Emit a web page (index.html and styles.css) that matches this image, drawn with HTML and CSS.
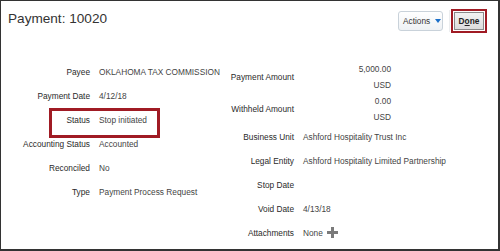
FILE: index.html
```html
<!DOCTYPE html>
<html lang="en">
<head>
<meta charset="utf-8">
<title>Payment: 10020</title>
<link rel="stylesheet" href="styles.css">
</head>
<body>
<section class="frame">

   <header class="page-head">
      <h1>Payment: 10020</h1>
      <div class="toolbar">
         <button class="btn-menu">Actions <span class="caret"></span></button>
         <span class="sep"></span>
         <span class="callout-btn"><button class="btn-done">D<u>o</u>ne</button></span>
      </div>
   </header>

   <div class="panels">

      <div class="form form-left">
         <div class="row"><span class="label">Payee</span><span class="value">OKLAHOMA TAX COMMISSION</span></div>
         <div class="row"><span class="label">Payment Date</span><span class="value">4/12/18</span></div>
         <div class="row callout"><span class="label">Status</span><span class="value">Stop initiated</span></div>
         <div class="row"><span class="label">Accounting Status</span><span class="value">Accounted</span></div>
         <div class="row"><span class="label">Reconciled</span><span class="value">No</span></div>
         <div class="row"><span class="label">Type</span><span class="value">Payment Process Request</span></div>
      </div>

      <div class="form form-right">
         <div class="row amount"><span class="label">Payment Amount</span><span class="value money">5,000.00<br>USD</span></div>
         <div class="row amount"><span class="label">Withheld Amount</span><span class="value money">0.00<br>USD</span></div>
         <div class="row"><span class="label">Business Unit</span><span class="value">Ashford Hospitality Trust Inc</span></div>
         <div class="row"><span class="label">Legal Entity</span><span class="value">Ashford Hospitality Limited Partnership</span></div>
         <div class="row"><span class="label">Stop Date</span><span class="value"></span></div>
         <div class="row"><span class="label">Void Date</span><span class="value">4/13/18</span></div>
         <div class="row"><span class="label">Attachments</span><span class="value">None
            <svg class="add" width="11" height="11" viewBox="0 0 11 11"><path d="M4 0h3v4h4v3H7v4H4V7H0V4h4z" fill="#7a7a7a"/></svg></span></div>
      </div>

   </div>

</section>
</body>
</html>
```

FILE: styles.css
```css
body {
   margin: 0;
   font-family: "Liberation Sans", Arial, sans-serif;
   color: #333;
}

.frame {
   width: 500px;
   height: 251px;
   box-sizing: border-box;
   border: 1px solid #333;
   border-right-width: 2px;
   border-bottom-width: 2px;
   background: #fff;
   overflow: hidden;
}

.page-head {
   display: flex;
   justify-content: space-between;
   align-items: flex-start;
   height: 51px;
   padding: 0 11px 0 7px;
}

h1 {
   margin: 10px 0 0;
   font-size: 13.6px;
   line-height: 16px;
   font-weight: normal;
   color: #333;
}

.toolbar {
   display: flex;
   align-items: center;
   margin-top: 8px;
}

.btn-menu {
   display: flex;
   align-items: center;
   gap: 5px;
   height: 20px;
   width: 45px;
   padding: 0 0 0 4px;
   border: 1px solid #c9d2da;
   border-radius: 3px;
   background: linear-gradient(#fff, #eef1f4);
   font: 8.3px "Liberation Sans", Arial, sans-serif;
   color: #333;
}

.caret {
   width: 0;
   height: 0;
   border-left: 3.5px solid transparent;
   border-right: 3.5px solid transparent;
   border-top: 4px solid #1a6fc9;
}

.sep {
   width: 1px;
   height: 22px;
   margin: 0 1px 0 6px;
   background: #eceef0;
}

.callout-btn {
   display: block;
   border: 2.5px solid #a01b24;
   padding: 1px;
}

.btn-done {
   display: block;
   width: 30px;
   height: 18px;
   padding: 0;
   border: 1px solid #8a8a8a;
   background: linear-gradient(#f2f2f2, #dcdcdc);
   font: bold 8.3px "Liberation Sans", Arial, sans-serif;
   color: #222;
}

.btn-done u {
   text-decoration-thickness: 1px;
}

.panels {
   display: flex;
   padding-top: 8px;
}

.form {
   display: flex;
   flex-direction: column;
   font-size: 8.3px;
}

.row {
   display: grid;
   align-items: center;
   column-gap: 9px;
   height: 24px;
   line-height: 16px;
}

.label {
   text-align: right;
   color: #2a2a2a;
   white-space: nowrap;
}

.value {
   color: #444;
   white-space: nowrap;
}

.form-left {
   width: 213px;
   padding-left: 7px;
}

.form-left .row {
   grid-template-columns: 82px 1fr;
}

.form-right {
   padding-top: 1px;
}

.form-right .row {
   grid-template-columns: 73px 1fr;
}

.row.amount {
   height: 32px;
}

.money {
   width: 88px;
   text-align: right;
}

.add {
   vertical-align: -2px;
   margin-left: 2px;
}

.callout {
   position: relative;
}

.callout::after {
   content: "";
   position: absolute;
   left: 41px;
   top: 0;
   width: 105px;
   height: 24px;
   border: 3px solid #a01b24;
}
```
